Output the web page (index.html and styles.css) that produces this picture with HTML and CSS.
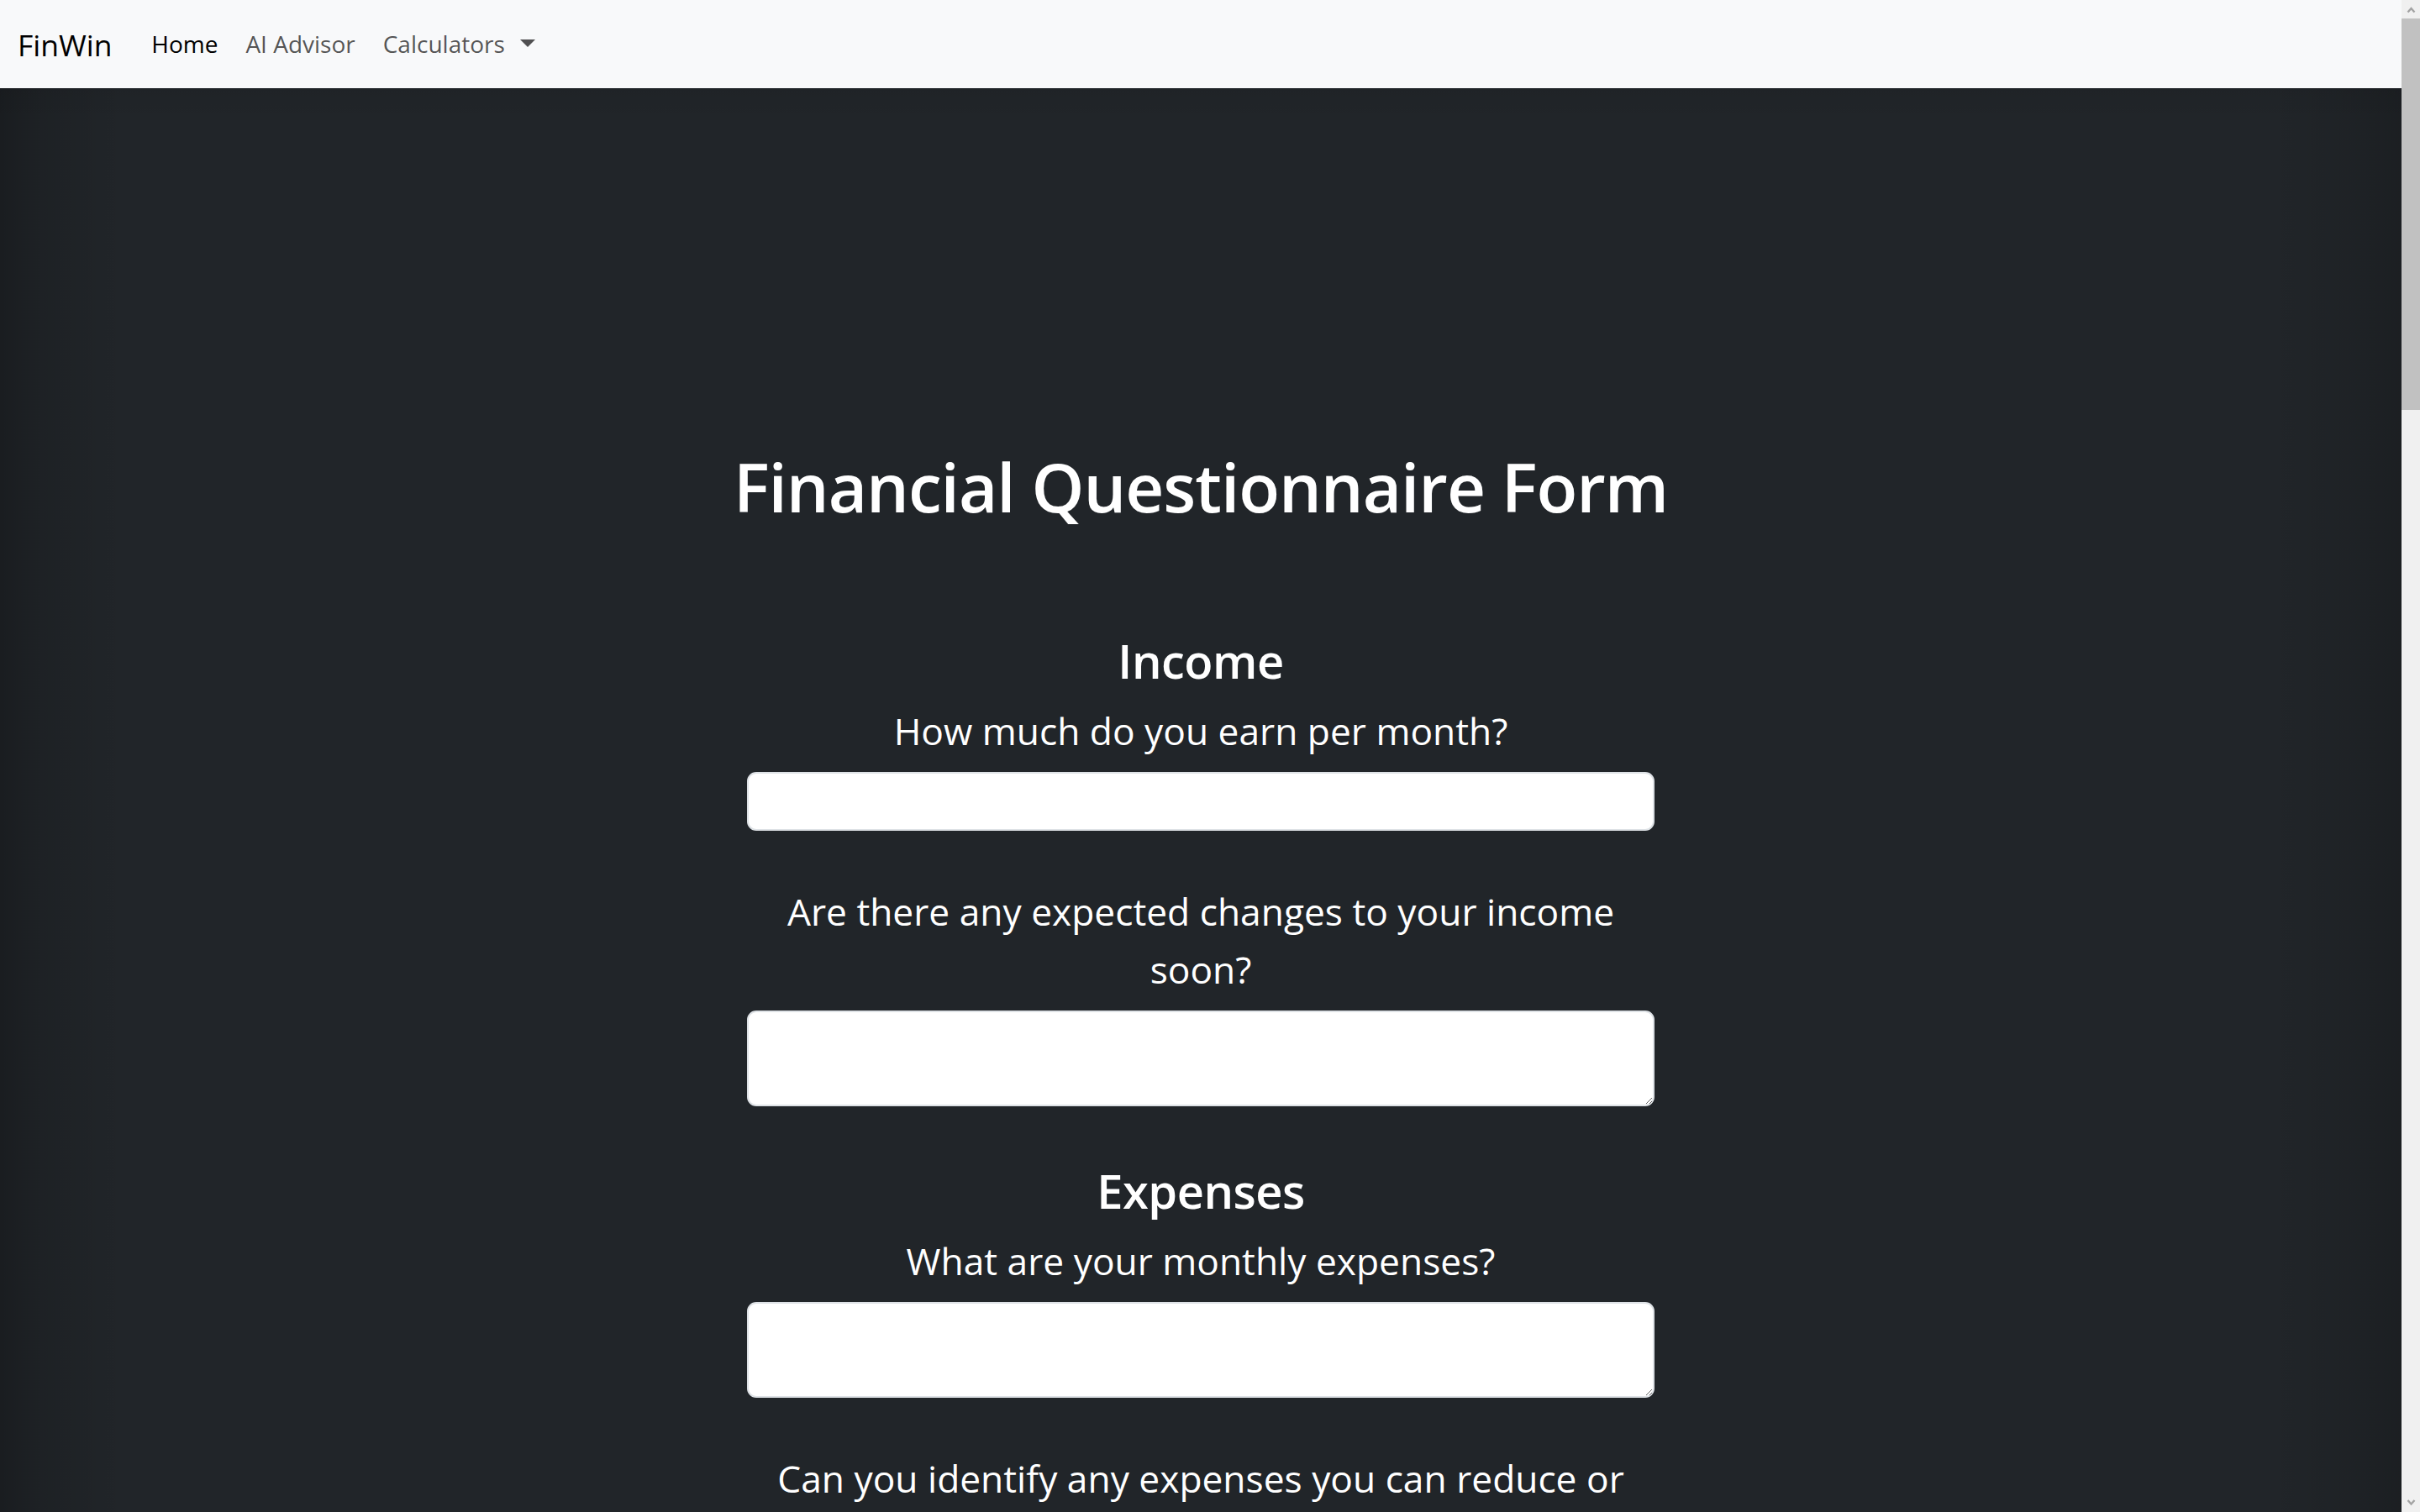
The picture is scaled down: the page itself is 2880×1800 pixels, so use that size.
FILE: index.html
```html
<!DOCTYPE html>
<html lang="en">
<head>
<meta charset="utf-8">
<title>FinWin – Financial Questionnaire</title>
<link rel="stylesheet" href="styles.css">
</head>
<body>
<div class="window">
  <div class="page">
    <nav class="navbar">
      <a class="navbar-brand" href="#">FinWin</a>
      <ul class="navbar-nav">
        <li><a class="nav-link active" href="#">Home</a></li>
        <li><a class="nav-link" href="#">AI Advisor</a></li>
        <li><a class="nav-link dropdown-toggle" href="#">Calculators</a></li>
      </ul>
    </nav>

    <main class="hero">
      <h1 class="page-title">Financial Questionnaire Form</h1>
      <form class="questionnaire">
        <section class="q-section q-section-first">
          <h2 class="q-heading">Income</h2>
          <div class="field">
            <label class="q-label" for="income">How much do you earn per month?</label>
            <input class="form-control" id="income" type="text">
          </div>
          <div class="field">
            <label class="q-label" for="income-changes">Are there any expected changes to your income soon?</label>
            <textarea class="form-control form-area" id="income-changes"></textarea>
          </div>
        </section>

        <section class="q-section">
          <h2 class="q-heading">Expenses</h2>
          <div class="field">
            <label class="q-label" for="expenses">What are your monthly expenses?</label>
            <textarea class="form-control form-area" id="expenses"></textarea>
          </div>
          <div class="field">
            <label class="q-label" for="reduce">Can you identify any expenses you can reduce or eliminate?</label>
            <textarea class="form-control form-area" id="reduce"></textarea>
          </div>
        </section>
      </form>
    </main>
  </div>

  <div class="scrollbar" aria-hidden="true">
    <div class="sb-button">
      <svg width="22" height="22" viewBox="0 0 22 22"><polyline points="7.5,14.5 11.5,10 15.5,14.5" fill="none" stroke="#a3a3a3" stroke-width="2.4" stroke-linejoin="miter"/></svg>
    </div>
    <div class="sb-thumb"></div>
    <div class="sb-track"></div>
    <div class="sb-button">
      <svg width="22" height="22" viewBox="0 0 22 22"><polyline points="7.5,8 11.5,12.5 15.5,8" fill="none" stroke="#a3a3a3" stroke-width="2.4" stroke-linejoin="miter"/></svg>
    </div>
  </div>
</div>
</body>
</html>
```

FILE: styles.css
```css
html, body {
  margin: 0;
  padding: 0;
  height: 100%;
  overflow: hidden;
}

body {
  font-family: "Open Sans", "Noto Sans", sans-serif;
  color: #fff;
  background: #212529;
}

.window {
  display: flex;
  height: 100vh;
  overflow: hidden;
}

.page {
  flex: 1;
  min-width: 0;
  display: flex;
  flex-direction: column;
  overflow: hidden;
}

/* ---------- navbar ---------- */
.navbar {
  flex: 0 0 105px;
  height: 105px;
  box-sizing: border-box;
  display: flex;
  align-items: center;
  padding: 0 21px;
  background: #f8f9fa;
}

.navbar-brand {
  font-size: 35.5px;
  line-height: 56px;
  margin-right: 30.2px;
  color: #000;
  text-decoration: none;
}

.navbar-nav {
  display: flex;
  list-style: none;
  margin: 0;
  padding: 0;
}

.nav-link {
  display: block;
  font-size: 28px;
  line-height: 45px;
  padding: 0 16.5px;
  color: rgba(0, 0, 0, 0.68);
  text-decoration: none;
}

.nav-link.active {
  color: #000;
}

.dropdown-toggle::after {
  content: "";
  display: inline-block;
  margin-left: 18px;
  vertical-align: 7.2px;
  border-top: 9px solid;
  border-left: 9px solid transparent;
  border-right: 9px solid transparent;
  border-bottom: 0;
}

/* ---------- main ---------- */
.hero {
  flex: 1;
  min-height: 0;
  overflow: hidden;
  padding-top: 426px;
  text-align: center;
  background-color: #212529;
  background-image:
    linear-gradient(to right,
      rgba(0, 0, 0, 0.22) 0,
      rgba(0, 0, 0, 0.1) 50px,
      rgba(0, 0, 0, 0) 150px,
      rgba(0, 0, 0, 0) calc(100% - 160px),
      rgba(0, 0, 0, 0.08) calc(100% - 60px),
      rgba(0, 0, 0, 0.17) 100%),
    linear-gradient(to bottom, rgba(0, 0, 0, 0.05), rgba(0, 0, 0, 0) 40px);
}

.page-title {
  margin: 0;
  font-size: 80px;
  line-height: 96px;
  font-weight: 600;
  letter-spacing: -1px;
  color: #fff;
}

.questionnaire {
  width: 1080px;
  margin: 0 auto;
}

.q-section {
  margin-top: 67px;
}

.q-section-first {
  margin-top: 126px;
}

.q-heading {
  margin: 0 0 16px;
  font-size: 56px;
  line-height: 67px;
  font-weight: 600;
  letter-spacing: -0.5px;
  color: #fff;
}

.field + .field {
  margin-top: 62px;
}

.q-label {
  display: block;
  margin-bottom: 14px;
  font-size: 44.3px;
  line-height: 69px;
  font-weight: 400;
  color: #fff;
}

.form-control {
  display: block;
  width: 100%;
  height: 70px;
  box-sizing: border-box;
  margin: 0;
  padding: 11px 22px;
  font-family: inherit;
  font-size: 30px;
  color: #212529;
  background: #fff;
  border: 2px solid #dee2e6;
  border-radius: 11px;
  outline: none;
}

.form-area {
  height: 114px;
  resize: vertical;
}

/* ---------- scrollbar ---------- */
.scrollbar {
  flex: 0 0 22px;
  width: 22px;
  display: flex;
  flex-direction: column;
  background: #f0f0f0;
}

.sb-button {
  flex: 0 0 22px;
  height: 22px;
}

.sb-button svg {
  display: block;
}

.sb-thumb {
  flex: 0 0 466px;
  background: #c1c1c1;
}

.sb-track {
  flex: 1;
}
```
